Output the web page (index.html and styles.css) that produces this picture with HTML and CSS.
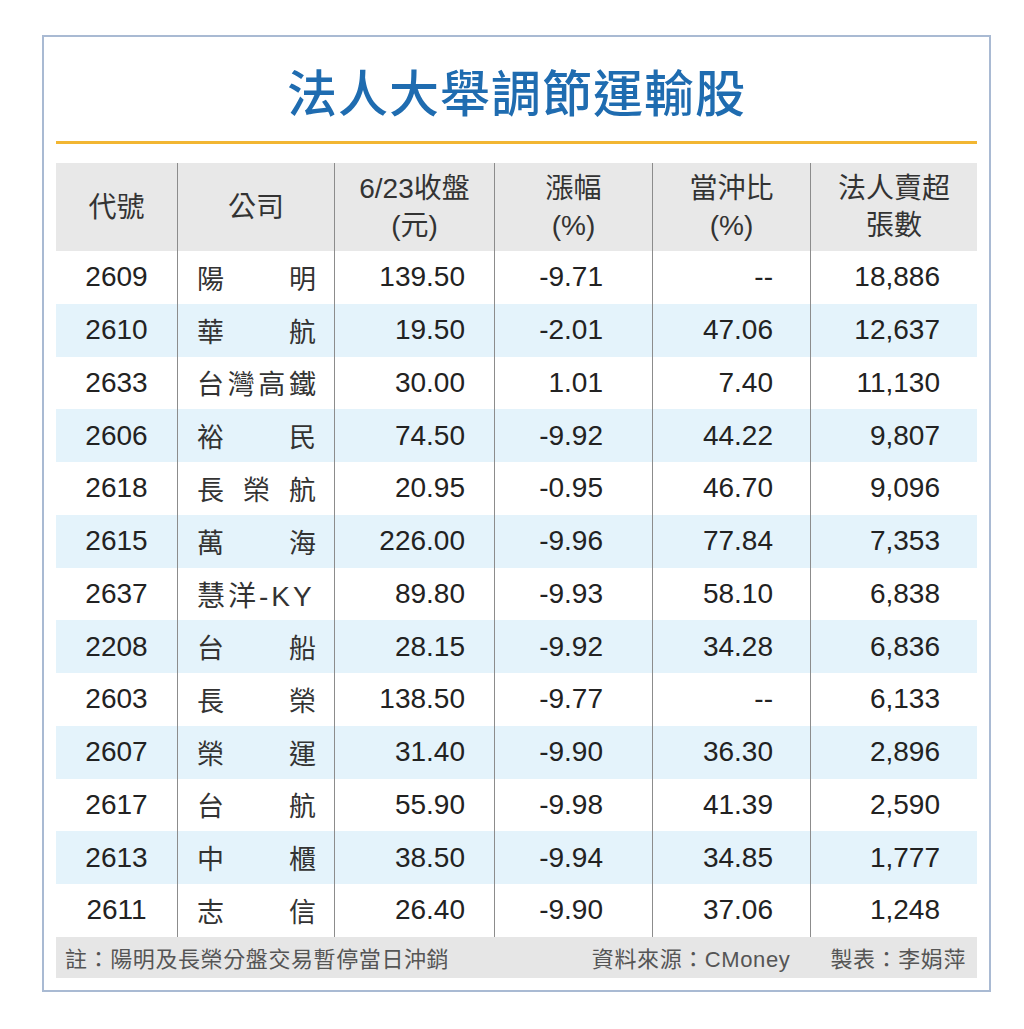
FILE: index.html
```html
<!DOCTYPE html>
<html lang="zh-Hant">
<head>
<meta charset="utf-8">
<link rel="stylesheet" href="styles.css">
</head>
<body>
<div class="card">
  <h1 class="title">法人大舉調節運輸股</h1>
  <div class="rule"></div>
  <div class="table">
    <div class="row head">
      <div class="c c1 hc">代號</div>
      <div class="c c2 hc">公司</div>
      <div class="c c3 hc">6/23收盤<br>(元)</div>
      <div class="c c4 hc">漲幅<br>(%)</div>
      <div class="c c5 hc">當沖比<br>(%)</div>
      <div class="c c6 hc">法人賣超<br>張數</div>
    </div>
    <div class="row"><div class="c c1">2609</div><div class="c c2 name"><span>陽</span><span>明</span></div><div class="c c3">139.50</div><div class="c c4">-9.71</div><div class="c c5">--</div><div class="c c6">18,886</div></div>
    <div class="row alt"><div class="c c1">2610</div><div class="c c2 name"><span>華</span><span>航</span></div><div class="c c3">19.50</div><div class="c c4">-2.01</div><div class="c c5">47.06</div><div class="c c6">12,637</div></div>
    <div class="row"><div class="c c1">2633</div><div class="c c2 name"><span>台</span><span>灣</span><span>高</span><span>鐵</span></div><div class="c c3">30.00</div><div class="c c4">1.01</div><div class="c c5">7.40</div><div class="c c6">11,130</div></div>
    <div class="row alt"><div class="c c1">2606</div><div class="c c2 name"><span>裕</span><span>民</span></div><div class="c c3">74.50</div><div class="c c4">-9.92</div><div class="c c5">44.22</div><div class="c c6">9,807</div></div>
    <div class="row"><div class="c c1">2618</div><div class="c c2 name"><span>長</span><span>榮</span><span>航</span></div><div class="c c3">20.95</div><div class="c c4">-0.95</div><div class="c c5">46.70</div><div class="c c6">9,096</div></div>
    <div class="row alt"><div class="c c1">2615</div><div class="c c2 name"><span>萬</span><span>海</span></div><div class="c c3">226.00</div><div class="c c4">-9.96</div><div class="c c5">77.84</div><div class="c c6">7,353</div></div>
    <div class="row"><div class="c c1">2637</div><div class="c c2 name ky">慧洋-KY</div><div class="c c3">89.80</div><div class="c c4">-9.93</div><div class="c c5">58.10</div><div class="c c6">6,838</div></div>
    <div class="row alt"><div class="c c1">2208</div><div class="c c2 name"><span>台</span><span>船</span></div><div class="c c3">28.15</div><div class="c c4">-9.92</div><div class="c c5">34.28</div><div class="c c6">6,836</div></div>
    <div class="row"><div class="c c1">2603</div><div class="c c2 name"><span>長</span><span>榮</span></div><div class="c c3">138.50</div><div class="c c4">-9.77</div><div class="c c5">--</div><div class="c c6">6,133</div></div>
    <div class="row alt"><div class="c c1">2607</div><div class="c c2 name"><span>榮</span><span>運</span></div><div class="c c3">31.40</div><div class="c c4">-9.90</div><div class="c c5">36.30</div><div class="c c6">2,896</div></div>
    <div class="row"><div class="c c1">2617</div><div class="c c2 name"><span>台</span><span>航</span></div><div class="c c3">55.90</div><div class="c c4">-9.98</div><div class="c c5">41.39</div><div class="c c6">2,590</div></div>
    <div class="row alt"><div class="c c1">2613</div><div class="c c2 name"><span>中</span><span>櫃</span></div><div class="c c3">38.50</div><div class="c c4">-9.94</div><div class="c c5">34.85</div><div class="c c6">1,777</div></div>
    <div class="row"><div class="c c1">2611</div><div class="c c2 name"><span>志</span><span>信</span></div><div class="c c3">26.40</div><div class="c c4">-9.90</div><div class="c c5">37.06</div><div class="c c6">1,248</div></div>
  </div>
  <div class="foot">
    <span class="note">註：陽明及長榮分盤交易暫停當日沖銷</span>
    <span class="credits"><span>資料來源：CMoney</span><span>製表：李娟萍</span></span>
  </div>
</div>
</body>
</html>
```

FILE: styles.css
```css
html, body {
  margin: 0;
  padding: 0;
  background: #ffffff;
}
body {
  font-family: "Liberation Sans", "Noto Sans CJK TC", sans-serif;
  color: #222;
}
.card {
  box-sizing: border-box;
  width: 949px;
  height: 957px;
  margin: 35px 0 0 42px;
  border: 2px solid #a9bad3;
  padding: 0 12px 12px 12px;
  background: #fff;
}
.title {
  margin: 0;
  height: 104px;
  line-height: 106px;
  text-align: center;
  font-family: "Noto Sans CJK TC", sans-serif;
  font-weight: 500;
  font-size: 50px;
  color: #1f6cb0;
  letter-spacing: 1px;
}
.rule {
  height: 3px;
  background: #f2b632;
  margin-bottom: 19px;
}
.table {
  display: flex;
  flex-direction: column;
}
.row {
  display: grid;
  grid-template-columns: 121px 157px 160px 158px 158px 167px;
  height: 52.75px;
  font-size: 28px;
  align-items: stretch;
}
.row.alt {
  background: #e4f3fb;
}
.row.head {
  height: 88px;
  background: #e8e8e8;
  color: #333;
  line-height: 37px;
}
.c {
  display: flex;
  align-items: center;
  justify-content: flex-end;
  box-sizing: border-box;
  white-space: nowrap;
}
.c + .c {
  border-left: 1px solid #8c8c8c;
}
.c1 {
  justify-content: center;
}
.c3 { padding-right: 29px; }
.c4 { padding-right: 49px; }
.c5 { padding-right: 37px; }
.c6 { padding-right: 37px; }
.head .hc {
  justify-content: center;
  text-align: center;
  padding: 0;
}
.name {
  justify-content: space-between;
  padding: 0 18px 0 19px;
  color: #333;
  font-family: "Noto Sans CJK TC", sans-serif;
  font-size: 27px;
}
.name.ky {
  justify-content: flex-start;
  font-family: "Liberation Sans", "Noto Sans CJK TC", sans-serif;
  letter-spacing: 3px;
  font-size: 28px;
}
.foot {
  height: 41px;
  background: #e6e6e6;
  display: flex;
  align-items: center;
  justify-content: space-between;
  padding: 0 11px 0 9px;
  font-size: 22px;
  color: #555;
  letter-spacing: 0.6px;
}
.credits {
  display: flex;
  gap: 40px;
}
```
